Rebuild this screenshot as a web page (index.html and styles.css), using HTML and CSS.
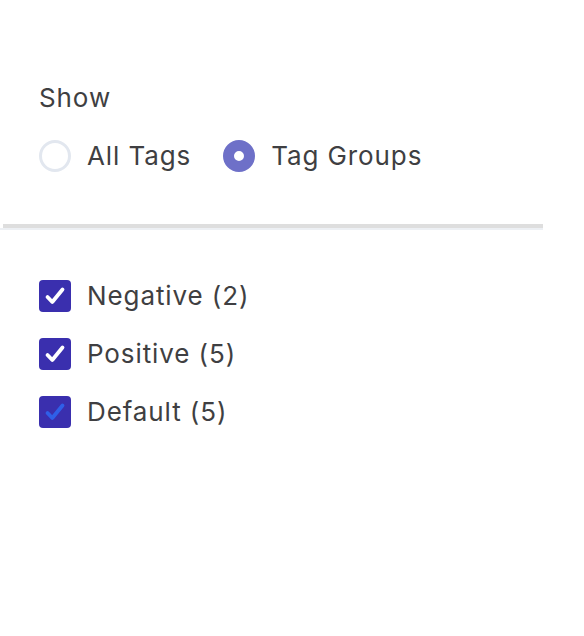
FILE: index.html
```html
<!DOCTYPE html>
<html>
<head>
<meta charset="utf-8">
<link rel="stylesheet" href="styles.css">
</head>
<body>
<div class="panel">
  <section class="show">
    <div class="label">Show</div>
    <div class="radios">
      <label class="radio-item"><span class="radio"></span><span>All Tags</span></label>
      <label class="radio-item"><span class="radio checked"></span><span>Tag Groups</span></label>
    </div>
  </section>
  <div class="divider"><div class="divider-line"></div></div>
  <section class="groups">
    <label class="check-item"><span class="check"><svg viewBox="0 0 32 32"><path d="M8.5 17l4.8 5L23.5 9.5" fill="none" stroke="#fff" stroke-width="3.8" stroke-linecap="round" stroke-linejoin="round"/></svg></span><span>Negative (2)</span></label>
    <label class="check-item"><span class="check"><svg viewBox="0 0 32 32"><path d="M8.5 17l4.8 5L23.5 9.5" fill="none" stroke="#fff" stroke-width="3.8" stroke-linecap="round" stroke-linejoin="round"/></svg></span><span>Positive (5)</span></label>
    <label class="check-item"><span class="check"><svg viewBox="0 0 32 32"><path d="M8.5 17l4.8 5L23.5 9.5" fill="none" stroke="#2f5fe8" stroke-width="3.8" stroke-linecap="round" stroke-linejoin="round"/></svg></span><span>Default (5)</span></label>
  </section>
</div>
</body>
</html>
```
FILE: styles.css
```css
html, body {
  margin: 0;
  padding: 0;
  background: #ffffff;
}
body {
  font-family: Inter, "Noto Sans", sans-serif;
  font-size: 26px;
  letter-spacing: 0.9px;
  color: #3f3f42;
}
.panel {
  padding-top: 80px;
}
.show {
  padding-left: 39px;
}
.label {
  line-height: 36px;
}
.radios {
  display: flex;
  gap: 32px;
  margin-top: 22px;
}
.radio-item {
  display: flex;
  align-items: center;
  gap: 16px;
  line-height: 36px;
}
.radio {
  box-sizing: border-box;
  width: 32px;
  height: 32px;
  border-radius: 50%;
  border: 3px solid #e2e7ef;
  background: #fff;
}
.radio.checked {
  border: 11px solid #6e70c8;
  background: #fff;
}
.divider {
  width: 543px;
  margin-top: 50px;
  border-bottom: 2px solid #edf0f4;
}
.divider-line {
  margin-left: 3px;
  height: 4px;
  background: #dedede;
}
.groups {
  padding-left: 39px;
  padding-top: 48px;
  display: flex;
  flex-direction: column;
  gap: 22px;
}
.check-item {
  display: flex;
  align-items: center;
  gap: 16px;
  line-height: 36px;
}
.check {
  width: 32px;
  height: 32px;
  border-radius: 4px;
  background: #3a2fae;
  display: flex;
}
.check svg {
  width: 32px;
  height: 32px;
}
```
